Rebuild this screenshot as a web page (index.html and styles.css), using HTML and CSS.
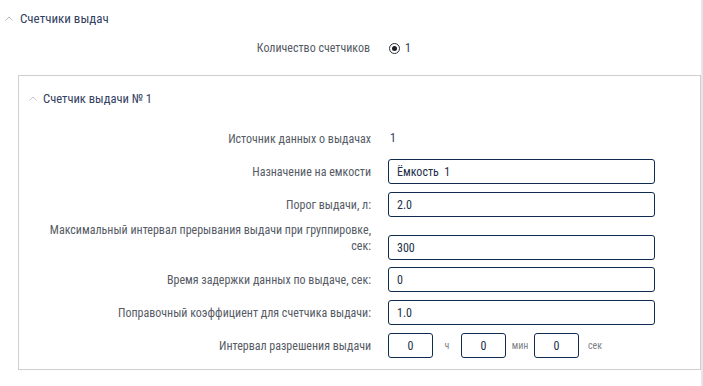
FILE: index.html
```html
<!DOCTYPE html>
<html lang="ru">
<head>
  <meta charset="UTF-8" />
  <link rel="stylesheet" href="styles.css">
</head>
<body>
  <div class="page">
    <div class="section-header">
      <svg class="chevron" width="8" height="5" viewBox="0 0 8 5"><polyline points="0.5,4.5 4,1 7.5,4.5" fill="none" stroke="#b5b9c0" stroke-width="1"/></svg>
      <span class="section-title">Счетчики выдач</span>
    </div>

    <div class="count-row">
      <div class="count-label">Количество счетчиков</div>
      <div class="radio-group">
        <span class="radio"></span>
        <span class="radio-text">1</span>
      </div>
    </div>

    <div class="panel">
      <div class="panel-header">
        <svg class="chevron" width="8" height="5" viewBox="0 0 8 5"><polyline points="0.5,4.5 4,1 7.5,4.5" fill="none" stroke="#c3c6cc" stroke-width="1"/></svg>
        <span class="panel-title">Счетчик выдачи № 1</span>
      </div>

      <div class="rows">
        <div class="row">
          <div class="label">Источник данных о выдачах</div>
          <div class="value">1</div>
        </div>
        <div class="row">
          <div class="label">Назначение на емкости</div>
          <input class="field" type="text" value="Ёмкость  1">
        </div>
        <div class="row">
          <div class="label">Порог выдачи, л:</div>
          <input class="field" type="text" value="2.0">
        </div>
        <div class="row row-tall">
          <div class="label">Максимальный интервал прерывания выдачи при группировке,<br>сек:</div>
          <input class="field" type="text" value="300">
        </div>
        <div class="row">
          <div class="label">Время задержки данных по выдаче, сек:</div>
          <input class="field" type="text" value="0">
        </div>
        <div class="row">
          <div class="label">Поправочный коэффициент для счетчика выдачи:</div>
          <input class="field" type="text" value="1.0">
        </div>
        <div class="row">
          <div class="label">Интервал разрешения выдачи</div>
          <div class="interval">
            <input class="field small" type="text" value="0">
            <span class="unit">ч</span>
            <input class="field small" type="text" value="0">
            <span class="unit">мин</span>
            <input class="field small" type="text" value="0">
            <span class="unit">сек</span>
          </div>
        </div>
      </div>
    </div>
  </div>
</body>
</html>
```

FILE: styles.css
```css
body {
  margin: 0;
  font-family: Roboto, "Noto Sans", sans-serif;
  font-stretch: 87.5%;
  background-color: #fff;
  color: #565b65;
}

.page {
  width: 701px;
  height: 386px;
  border-right: 2px solid #e6e6e6;
}

.section-header {
  display: flex;
  align-items: center;
  height: 36px;
  padding-left: 5px;
}

.chevron {
  flex-shrink: 0;
}

.section-title {
  font-size: 13px;
  color: #33415f;
  margin-left: 7px;
}

.count-row {
  display: flex;
  align-items: center;
  height: 22px;
  margin-top: 1px;
}

.count-label {
  width: 370px;
  text-align: right;
  font-size: 12px;
}

.radio-group {
  display: flex;
  align-items: center;
  margin-left: 19px;
  gap: 5px;
}

.radio {
  width: 9px;
  height: 9px;
  border: 1px solid #2b2f36;
  border-radius: 50%;
  display: flex;
  align-items: center;
  justify-content: center;
}

.radio::after {
  content: "";
  width: 5px;
  height: 5px;
  border-radius: 50%;
  background-color: #1d2027;
}

.radio-text {
  font-size: 12px;
  color: #33415f;
}

.panel {
  margin-top: 16px;
  margin-left: 18px;
  border: 1px solid #cfcfcf;
  height: 293px;
}

.panel-header {
  display: flex;
  align-items: center;
  height: 44px;
  padding-left: 10px;
}

.panel-title {
  font-size: 12.6px;
  color: #33415f;
  margin-left: 6px;
}

.rows {
  display: flex;
  flex-direction: column;
  gap: 8px;
  padding-top: 6px;
}

.row {
  display: flex;
  align-items: flex-end;
  gap: 17px;
}

.label {
  box-sizing: border-box;
  width: 352px;
  flex-shrink: 0;
  text-align: right;
  font-size: 12px;
  line-height: 16px;
  padding-bottom: 4px;
}

.row-tall {
  margin-top: -3px;
  margin-bottom: -1px;
}

.row-tall .label {
  padding-bottom: 6px;
}

.value {
  height: 25px;
  line-height: 25px;
  font-size: 12px;
  color: #33415f;
  padding-left: 2px;
}

.field {
  box-sizing: border-box;
  width: 267px;
  height: 25px;
  border: 1.5px solid #0f2b50;
  border-radius: 3px;
  padding: 0 8px;
  font-family: Roboto, "Noto Sans", sans-serif;
  font-stretch: 87.5%;
  font-size: 12px;
  color: #22304a;
  outline: none;
}

.interval {
  display: flex;
  align-items: center;
}

.field.small {
  width: 45px;
  text-align: center;
  padding: 0;
}

.unit {
  font-size: 10px;
  color: #7a7f88;
  width: 28px;
  text-align: center;
}

.unit:last-child {
  text-align: left;
  padding-left: 9px;
}
```
